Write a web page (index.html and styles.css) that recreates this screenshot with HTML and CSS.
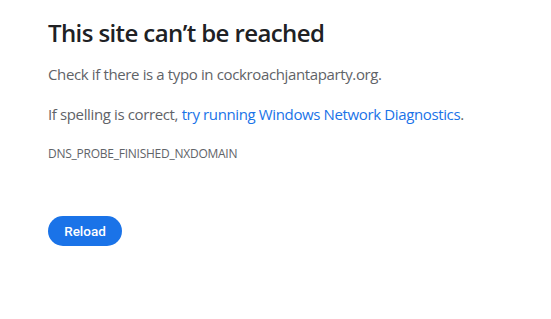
FILE: index.html
```html
<!DOCTYPE html>
<html>
<head>
<meta charset="utf-8">
<link rel="stylesheet" href="styles.css">
</head>
<body>
<div class="page">
  <h1 class="title">This site can’t be reached</h1>
  <p class="line first">Check if there is a typo in cockroachjantaparty.org.</p>
  <p class="line second">If spelling is correct, <a class="link" href="#">try running Windows Network Diagnostics</a>.</p>
  <div class="code">DNS_PROBE_FINISHED_NXDOMAIN</div>
  <button class="reload">Reload</button>
</div>
</body>
</html>
```
FILE: styles.css
```css
html, body { margin: 0; padding: 0; background: #fff; }
body { font-family: "Open Sans", "Noto Sans", sans-serif; color: #5f6368; }
.page { padding: 17px 0 0 48px; display: flex; flex-direction: column; align-items: flex-start; }
.title { margin: 0; font-size: 24px; font-weight: 600; color: #202124; line-height: 32px; letter-spacing: -0.6px; }
.line { margin: 0; font-size: 15px; line-height: 20px; letter-spacing: -0.37px; }
.first { margin-top: 15px; }
.second { margin-top: 20px; }
.link { color: #1a73e8; text-decoration: none; }
.code { margin-top: 22px; font-size: 12px; line-height: 16px; letter-spacing: -0.25px; color: #5f6368; }
.reload { margin-top: 54px; background: #1a73e8; color: #fff; border: none; border-radius: 16px; height: 30px; width: 74px; font-family: Roboto, sans-serif; font-size: 13.5px; font-weight: 500; padding: 0; }
```
